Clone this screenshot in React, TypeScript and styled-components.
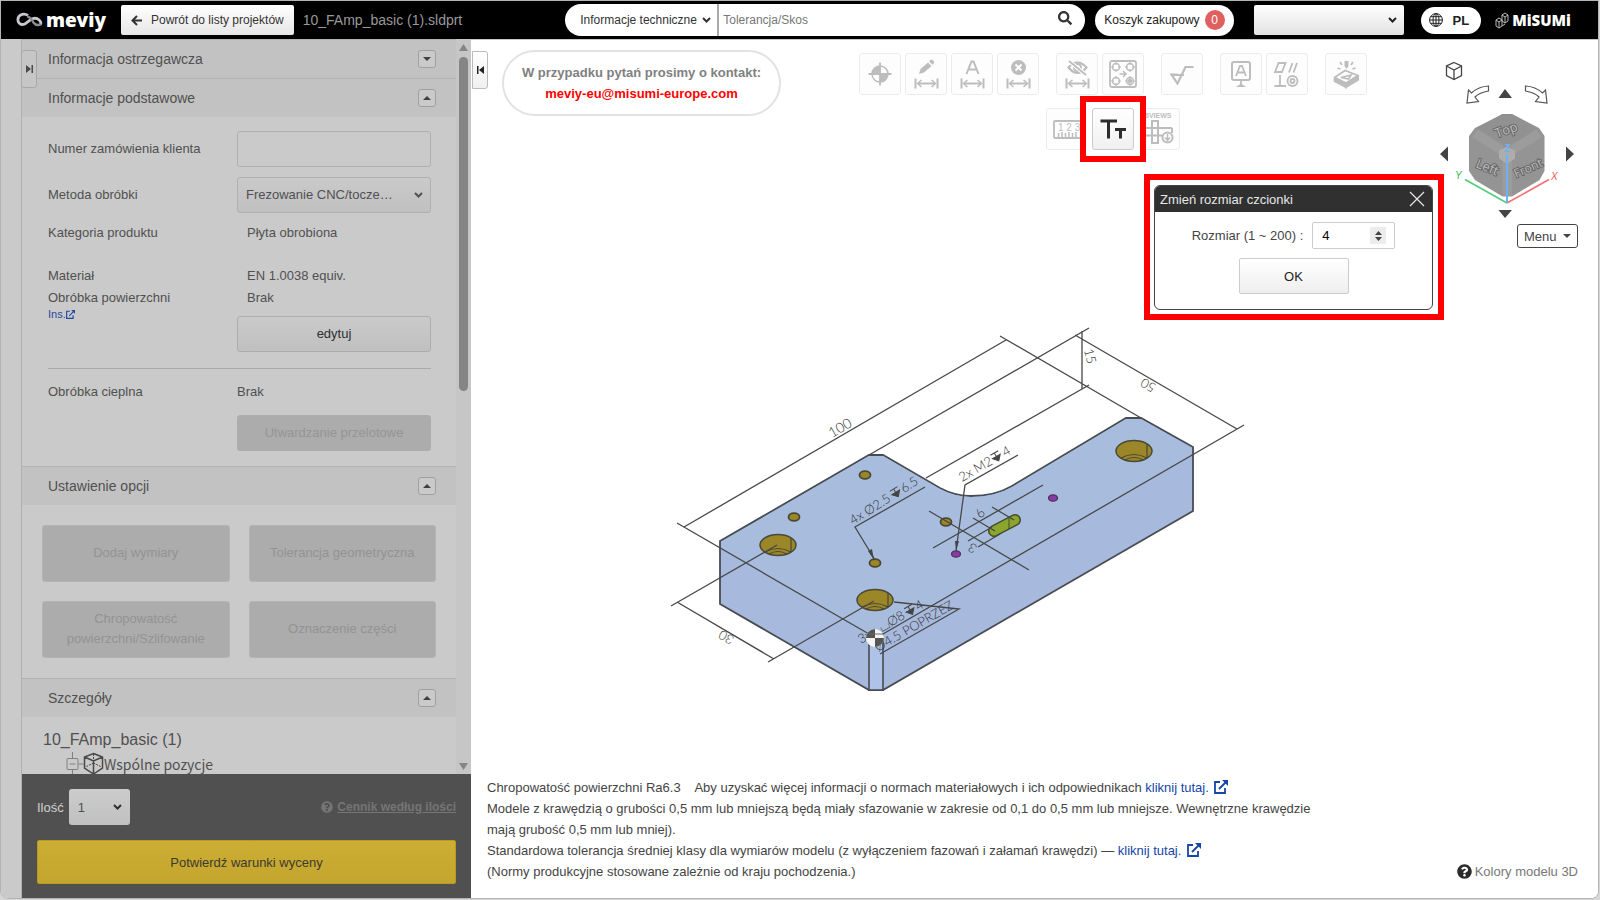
import React from "react";
import styled, { createGlobalStyle } from "styled-components";
import { FaSearch, FaQuestionCircle } from "react-icons/fa";

const GlobalStyle = createGlobalStyle`
  *, *::before, *::after { box-sizing: border-box; }
  body {
    margin: 0;
    background: #d6d6d6;
    font-family: "Liberation Sans", Arial, sans-serif;
    font-size: 13px;
    color: #444;
  }
  button, input, select { font: inherit; color: inherit; margin: 0; }
`;

const Page = styled.div`
  height: 100vh;
  min-height: 700px;
  padding: 0 1px 1px 0;
`;

const Window = styled.div`
  display: flex;
  flex-direction: column;
  height: 100%;
  border: 1px solid #b4b4b4;
  border-radius: 0 0 8px 8px;
  overflow: hidden;
  background: #fff;
`;

/* Header */

const Header = styled.header`
  display: flex;
  align-items: center;
  flex: none;
  height: 38px;
  padding: 0 27px 0 15px;
  background: #000;
  color: #fff;
`;

const Brand = styled.a`
  display: flex;
  align-items: center;
  gap: 3px;
  width: 90px;
  color: #fff;
  font: 800 19px/28px "Open Sans", sans-serif;
  text-decoration: none;
`;

const BackButton = styled.button`
  display: flex;
  align-items: center;
  gap: 9px;
  height: 30px;
  margin-left: 15px;
  padding: 0 10px;
  border: 0;
  border-radius: 2px;
  background: linear-gradient(#fff, #e6e6e6);
  color: #333;
  font-size: 12px;
  white-space: nowrap;
`;

const FileName = styled.span`
  margin-left: 9px;
  color: #999;
  font-size: 14px;
  white-space: nowrap;
`;

const Search = styled.form`
  display: flex;
  align-items: center;
  width: 520px;
  height: 32px;
  margin-left: auto;
  border-radius: 16px;
  background: #fff;
  color: #333;
  overflow: hidden;
`;

const SelectWrap = styled.span<{ $right: number }>`
  position: relative;
  display: block;
  svg {
    position: absolute;
    right: ${(p) => p.$right}px;
    top: 50%;
    margin-top: -4px;
    pointer-events: none;
  }
`;

const SearchSelect = styled.select`
  appearance: none;
  width: 154px;
  height: 32px;
  padding: 0 20px 0 15px;
  border: 0;
  border-right: 2px solid #aaa;
  background: transparent;
  font-size: 12px;
`;

const SearchInput = styled.input`
  flex: 1;
  min-width: 0;
  height: 32px;
  padding: 0 4px;
  border: 0;
  outline: 0;
  font-size: 12px;
  &::placeholder { color: #777; opacity: 1; }
`;

const SearchButton = styled.button`
  display: flex;
  padding: 0 13px 4px;
  border: 0;
  background: none;
`;

const CartButton = styled.button`
  display: flex;
  align-items: center;
  gap: 5px;
  height: 31px;
  margin-left: 10px;
  padding: 0 9px;
  border: 0;
  border-radius: 16px;
  background: #fff;
  color: #222;
  font-size: 12px;
  white-space: nowrap;
`;

const Badge = styled.span`
  width: 20px;
  height: 20px;
  border-radius: 10px;
  background: #e06060;
  color: #fff;
  font-size: 12px;
  line-height: 20px;
  text-align: center;
`;

const AccountSelect = styled.select`
  appearance: none;
  display: block;
  width: 150px;
  height: 30px;
  border: 0;
  border-radius: 2px;
  background: linear-gradient(#fff, #e2e2e2);
`;

const AccountWrap = styled(SelectWrap)`
  margin-left: 20px;
  color: #222;
`;

const LangButton = styled.button`
  display: flex;
  align-items: center;
  gap: 10px;
  height: 27px;
  margin-left: 17px;
  padding: 0 12px 0 8px;
  border: 0;
  border-radius: 14px;
  background: #fff;
  color: #222;
  font-weight: bold;
`;

const Misumi = styled.a`
  display: flex;
  align-items: center;
  gap: 3px;
  margin-left: 14px;
  color: #fff;
  font: 800 15px/20px "Open Sans", sans-serif;
  text-decoration: none;
`;

/* Sidebar */

const Main = styled.main`
  display: flex;
  flex: 1;
  min-height: 0;
`;

const Sidebar = styled.aside`
  position: relative;
  display: flex;
  flex: none;
  width: 470px;
  padding-left: 20px;
  background: #cacaca;
  color: #505050;
`;

const SidePanel = styled.div`
  display: flex;
  flex-direction: column;
  flex: 1;
  border-left: 1px solid #b0b0b0;
`;

const PanelHandle = styled.button<{ $left: number; $light?: boolean }>`
  position: absolute;
  z-index: 1;
  top: 11px;
  left: ${(p) => p.$left}px;
  display: flex;
  align-items: center;
  justify-content: center;
  width: 16px;
  height: 38px;
  padding: 0;
  border: 1px solid ${(p) => (p.$light ? "#bbb" : "#a8a8a8")};
  border-radius: ${(p) => (p.$light ? "0 3px 3px 0" : "3px")};
  background: ${(p) => (p.$light ? "linear-gradient(#fff, #f0f0f0)" : "#c6c6c6")};
  color: ${(p) => (p.$light ? "#222" : "#4a4a4a")};
`;

const ScrollRow = styled.div`
  display: flex;
  flex: 1;
  min-height: 0;
`;

const ScrollContent = styled.div`
  flex: 1;
  overflow: hidden;
`;

const ScrollTrack = styled.div`
  display: flex;
  flex-direction: column;
  align-items: center;
  width: 15px;
  padding: 5px 0 4px;
  background: #c6c6c6;
  color: #858585;
`;

const ScrollThumb = styled.div`
  flex: none;
  width: 9px;
  height: 46%;
  margin: 6px 0 auto;
  border-radius: 5px;
  background: #858585;
`;

const SectionHead = styled.div`
  display: flex;
  align-items: center;
  justify-content: space-between;
  height: 39px;
  padding: 0 20px 0 26px;
  border-top: 1px solid #b2b2b2;
  background: #c2c2c2;
  h2 {
    margin: 0;
    font-size: 14px;
    font-weight: normal;
  }
`;

const Toggle = styled.button`
  display: flex;
  align-items: center;
  justify-content: center;
  width: 18px;
  height: 18px;
  padding: 0;
  border: 1px solid #a0a0a0;
  border-radius: 3px;
  background: #cacaca;
  color: #404040;
`;

const BasicBody = styled.div`
  padding: 14px 25px 15px 26px;
`;

const Field = styled.div`
  display: grid;
  grid-template-columns: 189px 1fr;
  align-items: center;
  margin-bottom: 10px;
  line-height: 20px;
`;

const Details = styled.div`
  display: grid;
  grid-template-columns: 189px 1fr;
  margin-top: 22px;
  line-height: 22px;
`;

const HeatRow = styled(Details)`
  margin-top: 16px;
  padding-top: 12px;
  border-top: 1px solid #aaa;
`;

const Value = styled.div`
  padding-left: 10px;
`;

const TextInput = styled.input`
  width: 100%;
  height: 36px;
  padding: 0 9px;
  border: 1px solid #b0b0b0;
  border-radius: 3px;
  background: #cacaca;
`;

const FieldSelect = styled.select`
  appearance: none;
  display: block;
  width: 100%;
  height: 36px;
  padding: 0 30px 0 8px;
  border: 1px solid #b0b0b0;
  border-radius: 3px;
  background: linear-gradient(#cacaca, #c0c0c0);
`;

const SideButton = styled.button<{ $gap: number }>`
  width: 100%;
  height: 36px;
  margin-top: ${(p) => p.$gap}px;
  border: 1px solid #adadad;
  border-radius: 3px;
  background: linear-gradient(#cacaca, #c0c0c0);
  color: #303030;
  &:disabled {
    background: #acacac;
    color: #959595;
  }
`;

const SmallLink = styled.a`
  display: flex;
  align-items: center;
  color: #1f4a9c;
  font-size: 11px;
  line-height: 10px;
  text-decoration: none;
`;

const OptionGrid = styled.div`
  display: grid;
  grid-template-columns: 1fr 1fr;
  gap: 19px;
  padding: 20px;
`;

const OptionButton = styled.button`
  height: 57px;
  padding: 0 8px 2px;
  border: 1px solid #b4b4b4;
  border-radius: 3px;
  background: #acacac;
  line-height: 20px;
  &:disabled { color: #939393; }
`;

const Tree = styled.div`
  padding: 11px 21px 0;
  font-size: 16px;
  line-height: 24px;
`;

const TreeRow = styled.div`
  display: flex;
  align-items: center;
  padding-left: 23px;
  font-family: "Noto Sans CJK JP", sans-serif;
  font-size: 14px;
`;

const SideFooter = styled.div`
  flex: none;
  padding: 15px 15px 14px;
  background: #505050;
`;

const QuantityRow = styled.div`
  display: flex;
  align-items: center;
  height: 36px;
  margin-bottom: 15px;
  color: #d0d0d0;
  label { margin-right: 5px; }
`;

const QuantitySelect = styled.select`
  appearance: none;
  display: block;
  width: 61px;
  height: 36px;
  padding: 0 9px;
  border: 0;
  border-radius: 3px;
  background: linear-gradient(#cccccc, #c0c0c0);
  color: #505050;
`;

const QuantityWrap = styled(SelectWrap)`
  color: #303030;
`;

const PriceLink = styled.a`
  display: flex;
  align-items: center;
  gap: 4px;
  margin-left: auto;
  color: #757575;
  font-size: 12px;
  text-decoration: none;
  b { text-decoration: underline; }
`;

const ConfirmButton = styled.button`
  display: block;
  width: 100%;
  height: 44px;
  border: 1px solid #b89a20;
  border-radius: 2px;
  background: linear-gradient(#ccae32, #c4a52f);
  color: #3c3a30;
`;

/* Model view */

const Viewport = styled.section`
  position: relative;
  display: flex;
  flex-direction: column;
  flex: 1;
  min-width: 0;
  border-top: 1px solid #c8c8c8;
  background: #fff;
`;

const ViewTop = styled.div`
  display: flex;
  align-items: flex-start;
  flex: none;
  height: 270px;
`;

const Contact = styled.div`
  flex: none;
  width: 279px;
  height: 66px;
  margin: 10px 0 0 31px;
  padding-top: 10px;
  border: 2px solid #e2e2e2;
  border-radius: 33px;
  color: #808080;
  font-weight: bold;
  line-height: 21px;
  text-align: center;
  a { color: #f00; text-decoration: none; }
`;

const Toolbar = styled.div`
  display: flex;
  flex-direction: column;
  align-items: center;
  flex: 1;
  gap: 13px;
  margin: 13px 0 0 8px;
`;

const ToolRow = styled.div`
  display: flex;
  gap: 17px;
`;

const ToolGroup = styled.div`
  display: flex;
  gap: 4px;
`;

const Tool = styled.button`
  display: block;
  width: 42px;
  height: 42px;
  padding: 0;
  border: 1px solid #ececec;
  border-radius: 3px;
  background: #fdfdfd;
  color: #bdbdbd;
  svg { display: block; margin: 1px; }
`;

const ActiveTool = styled(Tool)`
  border-color: #ccc;
  background: linear-gradient(#fff, #f0f0f0);
  color: #2c2c2c;
`;

const Highlight = styled.div`
  position: relative;
  z-index: 1;
  margin: -12px;
  padding: 6px;
  border: 6px solid #f00;
  background: #fff;
`;

const NavPanel = styled.div`
  display: flex;
  flex-direction: column;
  align-items: flex-start;
  flex: none;
  width: 162px;
  padding-top: 14px;
`;

const MenuButton = styled.button`
  display: flex;
  align-items: center;
  gap: 6px;
  height: 24px;
  margin-left: 81px;
  padding: 0 6px;
  border: 1px solid #444;
  border-radius: 3px;
  background: #fff;
  color: #444;
`;

const DialogFrame = styled.div`
  position: absolute;
  z-index: 2;
  top: 134px;
  right: 154px;
  width: 300px;
  padding: 5px 5px 4px 4px;
  border: 6px solid #f00;
  background: #fff;
`;

const Dialog = styled.div`
  border: 1px solid #444;
  border-radius: 6px;
  overflow: hidden;
`;

const DialogTitle = styled.div`
  display: flex;
  align-items: center;
  justify-content: space-between;
  height: 26px;
  padding: 0 7px 0 5px;
  background: #303030;
  color: #e8e8e8;
`;

const CloseButton = styled.button`
  display: flex;
  padding: 0;
  border: 0;
  background: none;
`;

const DialogBody = styled.div`
  display: flex;
  flex-direction: column;
  align-items: center;
  gap: 9px;
  padding: 10px 0 15px;
`;

const SizeRow = styled.label`
  display: flex;
  align-items: center;
  gap: 9px;
`;

const SizeBox = styled.span`
  display: flex;
  align-items: center;
  width: 83px;
  height: 27px;
  padding-right: 8px;
  border: 1px solid #ccc;
  border-radius: 2px;
`;

const SizeInput = styled.input`
  appearance: textfield;
  flex: 1;
  min-width: 0;
  padding: 0 9px;
  border: 0;
  background: none;
  color: #000;
  &::-webkit-inner-spin-button { appearance: none; }
`;

const Spinner = styled.span`
  display: flex;
  align-items: center;
  justify-content: center;
  width: 16px;
  height: 17px;
  background: #ececec;
`;

const OkButton = styled.button`
  width: 110px;
  height: 36px;
  border: 1px solid #ccc;
  border-radius: 2px;
  background: linear-gradient(#fff, #eee);
  color: #222;
`;

const Stage = styled.div`
  flex: 1;
  min-height: 0;
  margin-left: 189px;
  svg { display: block; }
`;

const Bottom = styled.div`
  display: flex;
  align-items: flex-end;
  justify-content: space-between;
  flex: none;
  padding: 0 20px 16px 16px;
  line-height: 21px;
`;

const Notes = styled.div`
  max-width: 835px;
  p { margin: 0; }
  a { color: #1546a8; text-decoration: none; white-space: nowrap; }
  a svg { margin-left: 2px; vertical-align: -2px; }
`;

const ColorsLink = styled.a`
  display: flex;
  align-items: center;
  gap: 3px;
  color: #777;
  text-decoration: none;
  white-space: nowrap;
  svg { color: #2c2c2c; }
`;

const Chevron = () => (
  <svg width="9" height="8" viewBox="0 0 9 8" fill="none" stroke="currentColor" strokeWidth="2">
    <path d="M1 2l3.500 3.500L8 2" />
  </svg>
);

const Triangle = ({ down, w = 8 }: { down?: boolean; w?: number }) => (
  <svg width={w} height={w === 8 ? 4 : 7} viewBox="0 0 8 4" preserveAspectRatio="none">
    <path d={down ? "M0 0h8L4 4z" : "M0 4h8L4 0z"} fill="currentColor" />
  </svg>
);

const External = ({ size }: { size: number }) => (
  <svg width={size} height={size} viewBox="0 0 14 14" fill="none" stroke="currentColor" strokeWidth="1.800">
    <path d="M6 2H1v11h10V8M5 9l7-7" />
    <path d="M8 0h6v6z" fill="currentColor" stroke="none" />
  </svg>
);

const dimArrow = (
  <g>
    <path d="M8.500 23.500v10M30.500 23.500v10M11 28.500h17" strokeWidth="2" />
    <path d="M14.500 25l-4 3.500 4 3.500M24.500 25l4 3.500-4 3.500" strokeWidth="1.500" />
  </g>
);

const toolIcons: Record<string, React.ReactNode> = {
  Origin: (
    <g>
      <circle cx="19" cy="19" r="8" strokeWidth="1.500" />
      <path d="M19 11v8h-8a8 8 0 0 1 8-8zM19 27v-8h8a8 8 0 0 1-8 8z" fill="currentColor" stroke="none" />
      <path d="M19 7.500v23M7.500 19h23" strokeWidth="1.800" />
    </g>
  ),
  Edit: (
    <g>
      <path d="M12 19l1.500-5 7.500-6.500 3.500 3.500-7.500 6.500zM22 6.500l1.500-1.500q1-.8 2 0l1.300 1.300q.8 1 0 2L25.500 9.700z" fill="currentColor" stroke="none" />
      {dimArrow}
    </g>
  ),
  Text: (
    <g>
      <path d="M13.500 19L18.500 6.500h2l5 12.500M15.500 14.500h8" strokeWidth="2" />
      {dimArrow}
    </g>
  ),
  Remove: (
    <g>
      <circle cx="19.500" cy="12.500" r="7.500" fill="currentColor" stroke="none" />
      <path d="M16.500 9.500l6 6M22.500 9.500l-6 6" stroke="#fff" strokeWidth="2" />
      {dimArrow}
    </g>
  ),
  Hide: (
    <g>
      <path d="M10.500 12.500q9-10 18 0q-9 11-18 0z" strokeWidth="2.200" />
      <circle cx="19.500" cy="12.500" r="3.500" strokeWidth="2" />
      <path d="M11 6l17 14" stroke="#fff" strokeWidth="4" />
      <path d="M11 6l17 14" strokeWidth="1.800" />
      {dimArrow}
    </g>
  ),
  Pattern: (
    <g strokeWidth="1.500">
      <rect x="6" y="6" width="26" height="26" rx="2" strokeWidth="1.800" />
      {[[12, 12], [26, 12], [12, 26], [26, 26]].map(([x, y]) => (
        <g key={`${x}-${y}`}>
          <circle cx={x} cy={y} r="3.500" />
          <path d={`M${x} ${y - 5}v3M${x} ${y + 5}v-3M${x - 5} ${y}h3M${x + 5} ${y}h-3`} strokeWidth="1" />
        </g>
      ))}
      <circle cx="26" cy="26" r="1.500" fill="currentColor" />
      <path d="M15.500 19h6M19 16l3 3-3 3" />
    </g>
  ),
  Roughness: <path d="M14.500 19.500h-6l6 9 8-16.500h8M8 20h13" strokeWidth="2.200" />,
  Datum: (
    <g>
      <rect x="10" y="7" width="18" height="18" rx="2" strokeWidth="2" />
      <path d="M14 21l4-10h2l4 10M15.500 17.500h7M19 25v6" strokeWidth="1.800" />
      <path d="M14 32h10l-5-3.500z" fill="currentColor" stroke="none" />
    </g>
  ),
  Geometry: (
    <g strokeWidth="1.800">
      <path d="M7 17l3.500-9h7l-3.500 9zM21 17.500L24.500 8M25.500 17.500L29 8M12 20v11M6.500 31H18" />
      <circle cx="24.500" cy="26" r="5" />
      <circle cx="24.500" cy="26" r="2" />
    </g>
  ),
  Engrave: (
    <g strokeWidth="1.700">
      <path d="M7.500 22.500L18 15.500l13 5v4l-12 7.500-11.500-6zM7.500 22.500L19 28l12-7.500" />
      <path d="M8 23l11 5.500v3.500L8 26.500zM31 21v4l-12 7v-3.500z" fill="currentColor" />
      <path d="M14 22.500l10-2.500-2.500 4zM13 7l2 3M26 7l-2 3M10.500 13l3 1M28.500 13l-3 1" />
      <path d="M17.500 6h4v5l-2 3-2-3z" fill="currentColor" stroke="none" />
    </g>
  ),
  Ruler: (
    <g>
      <rect x="6" y="11" width="28" height="17" rx="1" strokeWidth="1.800" />
      <path d="M10.500 27v-4M14 27v-5M17.500 27v-4M21 27v-5M24.500 27v-4M28 27v-5" strokeWidth="1.500" />
      <text x="10" y="21" fontSize="10" fill="currentColor" stroke="none">1 2 3</text>
    </g>
  ),
  FontSize: (
    <path d="M6.500 11h16.500M14.500 11v17.500M21 19.500h11M26.500 19.500v9" strokeWidth="3" />
  ),
  Views: (
    <g strokeWidth="2">
      <text x="5" y="8" fontSize="7" fontWeight="bold" fill="currentColor" stroke="none">6VIEWS</text>
      <path d="M12 11h6v22h-6zM5 18h27M5 25.500h17M5 18v7.500M32 18v5" />
      <circle cx="27.500" cy="27.500" r="5" fill="#fdfdfd" />
      <path d="M27.500 24v6M25 27.500l2.500 3 2.500-3" strokeWidth="1.500" />
    </g>
  ),
};

const ToolIcon = ({ name }: { name: string }) => (
  <svg width="38" height="38" viewBox="0 0 38 38" fill="none" stroke="currentColor" aria-hidden="true">
    {toolIcons[name]}
  </svg>
);

const toolGroups = [
  ["Origin", "Edit", "Text", "Remove"],
  ["Hide", "Pattern"],
  ["Roughness"],
  ["Datum", "Geometry"],
  ["Engrave"],
];

const NavCube = () => (
  <svg width="150" height="170" viewBox="1436 55 150 170" fill="none" aria-label="View cube">
    <path d="M1454 63.500l7.500 3.500v9.500l-7.500 4-7.500-4V67zM1446.500 67l7.500 4 7.500-4M1454 71v9.500" stroke="#444" strokeWidth="1.300" />
    <path d="M1467 104l1.500-13 3 3q7-6.500 17-7v5q-9 1.500-13.500 6l3.500 4.500zM1547 104l-1.500-13-3 3q-7-6.500-17-7v5q9 1.500 13.500 6l-3.500 4.500z" stroke="#555" strokeWidth="1.200" />
    <path d="M1498.500 99h13.500l-7-9zM1498.500 211h13.500l-7 8zM1440 155l8-7.500v15zM1574 155l-8-7.500v15z" fill="#444" />
    <path d="M1502.500 115h9.500l27 14 5.500 8v35l-5 9-27.500 16.500h-9.500l-27.500-16.500-6-9v-35l6-8z" fill="#949494" />
    <path d="M1502.500 115h9.500l24 14-26 18h-6l-26-18z" fill="#919191" />
    <path d="M1472 138l6-7 26 16-5 8zM1542 138l-6-7-26 16 5 8zM1502.500 160h9.500v37h-9.500z" fill="#9c9c9c" />
    <path d="M1507 147.500l8 4v8l-8 5-8-5v-8z" fill="#adadad" />
    <g fontFamily="Open Sans" fontSize="13" fill="#bcbcbc" stroke="#686868" strokeWidth="2" paintOrder="stroke">
      <text transform="translate(1497 139) rotate(-20)">Top</text>
      <text transform="translate(1475 168) rotate(22)">Left</text>
      <text transform="translate(1516 179) rotate(-24)" fontSize="12">Front</text>
    </g>
    <path d="M1507 204l-42-23.500" stroke="#4fcf78" strokeWidth="1.600" />
    <path d="M1507 204l42-23.500" stroke="#f67272" strokeWidth="1.600" />
    <path d="M1507 156v48" stroke="#6cb2f5" strokeWidth="2" />
    <g fontSize="10" fontStyle="italic">
      <text x="1504" y="153" fill="#6cb2f5" fontWeight="bold">Z</text>
      <text x="1551" y="181" fill="#e85555">X</text>
      <text x="1455" y="180" fill="#31b45c">Y</text>
    </g>
  </svg>
);

const bigHoles = [[778, 545], [875, 600], [1134, 451]];
const smallHoles = [[865, 475], [794, 517], [946, 522], [875, 563]];
const tappedHoles = [[956, 554], [1053, 498]];

const dimensionLines =
  "M684 527L1006 340M1000 336L1141 418M677 523L869 634M869 455L1089 328M926 478L1089 385M1082 331V389" +
  "M1075 335L1237 429M883 634L1244 425M677 602L774 659M671 606L777 545M768 662L874 601" +
  "M929 511L1029 570M933 548L1043 485M973 518L995 531M992 507L1014 520M968 541L992 527M978 547L1000 534" +
  "M875 560L855 527L925 487M956 551L965 485L1018 455M894 602L959 609L880 654";

const depthMark = (x: number, y: number) => (
  <path d={`M${x} ${y - 9}h9M${x + 4.5} ${y - 9}v8M${x} ${y - 5}h9l-4.500 5z`} stroke="#444" fill="#444" />
);

const Plate = () => (
  <svg width="600" height="400" viewBox="660 310 600 400" fill="none" role="img" aria-label="10_FAmp_basic (1)">
    <path
      d="M720 541L869 455h14L940 488Q955 496 971 496Q995 496 1012 486L1126 418h15L1193 447V511L883 690h-14L720 604z"
      fill="#a7b9dc"
      stroke="#484c52"
      strokeWidth="1.800"
    />
    <path d="M721 542L869 456h14L940 489Q955 497 971 497Q995 497 1012 487L1126 419h15L1192 448V455L883 634h-14L721 548z" fill="#a8bddd" />
    <path d="M869 634v56h14v-56z" fill="#aec3e7" stroke="#484c52" strokeWidth="1.600" />
    {bigHoles.map(([x, y]) => (
      <g key={x} stroke="#4a4836" strokeWidth="1.500">
        <ellipse cx={x} cy={y} rx="18" ry="10.500" fill="#9c8728" />
        <path d={`M${x - 13} ${y + 7}q13-7 26 0M${x - 9} ${y + 9}q9-5 18 0M${x + 13} ${y - 7}v14`} strokeWidth="1.200" />
      </g>
    ))}
    {smallHoles.map(([x, y]) => (
      <ellipse key={x + y} cx={x} cy={y} rx="5.500" ry="3.800" fill="#9c8728" stroke="#4a4836" strokeWidth="1.800" />
    ))}
    {tappedHoles.map(([x, y]) => (
      <ellipse key={x} cx={x} cy={y} rx="4.500" ry="3.200" fill="#883aa2" stroke="#4d3560" strokeWidth="1.300" />
    ))}
    <path d="M994 531L1015 520" stroke="#464d2c" strokeWidth="12" strokeLinecap="round" />
    <path d="M994 531L1015 520" stroke="#8ca52e" strokeWidth="9" strokeLinecap="round" />
    <path d="M1009 518v11" stroke="#464d2c" />
    <path d={dimensionLines} stroke="#484848" strokeWidth="1.300" />
    <path d="M874 560l-6-9 4-2zM956 551l-1-10 4 0z" fill="#444" />
    <g fontFamily="Lato, sans-serif" fontWeight="300" fontSize="13" fill="#303030">
      <text transform="translate(832 438) rotate(-30)" fontSize="14">100</text>
      <text transform="translate(1084 350) rotate(76)">15</text>
      <text transform="translate(1157 385) rotate(210)">50</text>
      <text transform="translate(735 637) rotate(210)">30</text>
      <text transform="translate(981 519) rotate(-50)">6</text>
      <text transform="translate(978 546) rotate(210)">3</text>
      <g transform="translate(853 525) rotate(-32)">
        <text>4x Ø2.5</text>
        {depthMark(49, 0)}
        <text x="60">6.5</text>
      </g>
      <g transform="translate(962 482) rotate(-30)">
        <text>2x M2</text>
        {depthMark(38, 0)}
        <text x="50">4</text>
      </g>
      <g transform="translate(861 644) rotate(-30)">
        <text>3x</text>
        <text x="24">⌴Ø8</text>
        {depthMark(55, 0)}
        <text x="66">4</text>
      </g>
      <text transform="translate(878 652) rotate(-30)">Ø4.5 POPRZEZ</text>
    </g>
    <circle cx="875" cy="638" r="9" fill="#f4f4f4" />
    <path d="M875 638v-9a9 9 0 0 0-9 9zM875 638v9a9 9 0 0 0 9-9z" fill="#555" />
    <path d="M869 634h14" stroke="#666" />
  </svg>
);

const Section = ({ title, closed }: { title: string; closed?: boolean }) => (
  <SectionHead>
    <h2>{title}</h2>
    <Toggle type="button" aria-label={title}>
      <Triangle down={closed} />
    </Toggle>
  </SectionHead>
);

export default function App() {
  return (
    <Page>
      <GlobalStyle />
      <Window>
        <Header>
          <Brand href="#">
            <svg width="29" height="16" viewBox="0 0 29 16" fill="none" stroke="#c8c8ce">
              <path d="M13 3Q9 .5 5 2.500Q1 5 2.500 10Q5 14.500 10 12Q13 9.500 16 7.500Q21 4.500 25 8Q28 11 26 13" strokeWidth="3" />
              <path d="M12 4Q16 5 19 11Q22 15 27 12.500" stroke="#8b8b91" strokeWidth="2.500" />
            </svg>
            meviy
          </Brand>
          <BackButton type="button">
            <svg width="11" height="11" viewBox="0 0 11 11" fill="none" stroke="currentColor" strokeWidth="2">
              <path d="M11 5.500H1.500M6 1L1.500 5.500 6 10" />
            </svg>
            Powrót do listy projektów
          </BackButton>
          <FileName>10_FAmp_basic (1).sldprt</FileName>
          <Search onSubmit={(e) => e.preventDefault()}>
            <SelectWrap $right={8}>
              <SearchSelect aria-label="Zakres">
                <option>Informacje techniczne</option>
              </SearchSelect>
              <Chevron />
            </SelectWrap>
            <SearchInput placeholder="Tolerancja/Skos" aria-label="Szukaj" />
            <SearchButton type="submit" aria-label="Szukaj">
              <FaSearch size={14} />
            </SearchButton>
          </Search>
          <CartButton type="button">
            Koszyk zakupowy <Badge>0</Badge>
          </CartButton>
          <AccountWrap $right={7}>
            <AccountSelect aria-label="Konto" />
            <Chevron />
          </AccountWrap>
          <LangButton type="button">
            <svg width="14" height="14" viewBox="0 0 14 14" fill="none" stroke="currentColor">
              <circle cx="7" cy="7" r="6.400" />
              <ellipse cx="7" cy="7" rx="3" ry="6.400" />
              <path d="M.5 7h13M7 .5v13M1.500 3.700h11M1.500 10.300h11" />
            </svg>
            PL
          </LangButton>
          <Misumi href="#">
            <svg width="14" height="17" viewBox="0 0 14 17" fill="none" stroke="#bbb">
              <path d="M7 6V3l3-2 3 2v6l-3 2-3-2zM7 3l3 2 3-2M10 5v6M1 8l3-2 3 2v6l-3 2-3-2zM1 8l3 2 3-2M4 10v6M7 14l3-2" />
            </svg>
            MiSUMi
          </Misumi>
        </Header>

        <Main>
          <Sidebar>
            <PanelHandle type="button" $left={20} aria-label="Rozwiń panel">
              <svg width="7" height="8" viewBox="0 0 7 8">
                <path d="M0 0l5 4-5 4zM5.500 0H7v8H5.500z" fill="currentColor" />
              </svg>
            </PanelHandle>
            <SidePanel>
              <ScrollRow>
                <ScrollContent>
                  <Section title="Informacja ostrzegawcza" closed />
                  <Section title="Informacje podstawowe" />
                  <BasicBody>
                    <Field>
                      <label htmlFor="order">Numer zamówienia klienta</label>
                      <TextInput id="order" />
                    </Field>
                    <Field>
                      <label htmlFor="method">Metoda obróbki</label>
                      <SelectWrap $right={8}>
                        <FieldSelect id="method">
                          <option>Frezowanie CNC/tocze…</option>
                        </FieldSelect>
                        <Chevron />
                      </SelectWrap>
                    </Field>
                    <Field>
                      <span>Kategoria produktu</span>
                      <Value>Płyta obrobiona</Value>
                    </Field>
                    <Details>
                      <div>
                        <div>Materiał</div>
                        <div>Obróbka powierzchni</div>
                        <SmallLink href="#">
                          Ins.
                          <External size={9} />
                        </SmallLink>
                      </div>
                      <div>
                        <Value>EN 1.0038 equiv.</Value>
                        <Value>Brak</Value>
                        <SideButton type="button" $gap={7}>edytuj</SideButton>
                      </div>
                    </Details>
                    <HeatRow>
                      <div>Obróbka cieplna</div>
                      <div>
                        Brak
                        <SideButton type="button" $gap={12} disabled>Utwardzanie przelotowe</SideButton>
                      </div>
                    </HeatRow>
                  </BasicBody>
                  <Section title="Ustawienie opcji" />
                  <OptionGrid>
                    <OptionButton type="button" disabled>Dodaj wymiary</OptionButton>
                    <OptionButton type="button" disabled>Tolerancja geometryczna</OptionButton>
                    <OptionButton type="button" disabled>Chropowatość powierzchni/Szlifowanie</OptionButton>
                    <OptionButton type="button" disabled>Oznaczenie części</OptionButton>
                  </OptionGrid>
                  <Section title="Szczegóły" />
                  <Tree>
                    <div>10_FAmp_basic (1)</div>
                    <TreeRow>
                      <svg width="38" height="24" viewBox="0 0 38 24" fill="none" stroke="#808080">
                        <path d="M6.500 0v6M6.500 18v6M12.500 12h5M3.500 12h6" />
                        <rect x="1" y="6.500" width="11" height="11" rx="1" />
                        <path d="M27.500 1.500l9 3.500v11l-9 6-9-6V5zM18.500 5l9 4 9-4M27.500 9v13" stroke="#484848" strokeWidth="1.500" />
                        <path d="M27.500 2v9l-8 4M27.500 11l8 4" stroke="#484848" strokeDasharray="2 1" />
                      </svg>
                      Wspólne pozycje
                    </TreeRow>
                  </Tree>
                </ScrollContent>
                <ScrollTrack>
                  <Triangle w={9} />
                  <ScrollThumb />
                  <Triangle w={9} down />
                </ScrollTrack>
              </ScrollRow>
              <SideFooter>
                <QuantityRow>
                  <label htmlFor="qty">Ilość</label>
                  <QuantityWrap $right={8}>
                    <QuantitySelect id="qty">
                      <option>1</option>
                    </QuantitySelect>
                    <Chevron />
                  </QuantityWrap>
                  <PriceLink href="#">
                    <FaQuestionCircle size={12} />
                    <b>Cennik według ilości</b>
                  </PriceLink>
                </QuantityRow>
                <ConfirmButton type="button">Potwierdź warunki wyceny</ConfirmButton>
              </SideFooter>
            </SidePanel>
          </Sidebar>

          <Viewport>
            <PanelHandle type="button" $left={1} $light aria-label="Zwiń panel">
              <svg width="7" height="8" viewBox="0 0 7 8">
                <path d="M7 0L2 4l5 4zM0 0h1.500v8H0z" fill="currentColor" />
              </svg>
            </PanelHandle>
            <ViewTop>
              <Contact>
                W przypadku pytań prosimy o kontakt:
                <br />
                <a href="mailto:meviy-eu@misumi-europe.com">meviy-eu@misumi-europe.com</a>
              </Contact>
              <Toolbar>
                <ToolRow>
                  {toolGroups.map((group) => (
                    <ToolGroup key={group[0]}>
                      {group.map((name) => (
                        <Tool key={name} type="button" aria-label={name} disabled>
                          <ToolIcon name={name} />
                        </Tool>
                      ))}
                    </ToolGroup>
                  ))}
                </ToolRow>
                <ToolGroup>
                  <Tool type="button" aria-label="Ruler" disabled>
                    <ToolIcon name="Ruler" />
                  </Tool>
                  <Highlight>
                    <ActiveTool type="button" aria-label="Font size">
                      <ToolIcon name="FontSize" />
                    </ActiveTool>
                  </Highlight>
                  <Tool type="button" aria-label="Views" disabled>
                    <ToolIcon name="Views" />
                  </Tool>
                </ToolGroup>
              </Toolbar>
              <NavPanel>
                <NavCube />
                <MenuButton type="button">
                  Menu <Triangle down />
                </MenuButton>
              </NavPanel>
            </ViewTop>

            <DialogFrame>
              <Dialog role="dialog" aria-label="Zmień rozmiar czcionki">
                <DialogTitle>
                  Zmień rozmiar czcionki
                  <CloseButton type="button" aria-label="Zamknij">
                    <svg width="16" height="16" viewBox="0 0 16 16" stroke="currentColor" strokeWidth="1.200">
                      <path d="M1 1l14 14M15 1L1 15" />
                    </svg>
                  </CloseButton>
                </DialogTitle>
                <DialogBody>
                  <SizeRow>
                    Rozmiar (1 ~ 200) :
                    <SizeBox>
                      <SizeInput type="number" min={1} max={200} defaultValue={4} />
                      <Spinner>
                        <svg width="7" height="10" viewBox="0 0 7 10">
                          <path d="M0 4h7L3.500 0zM0 6h7l-3.500 4z" fill="#444" />
                        </svg>
                      </Spinner>
                    </SizeBox>
                  </SizeRow>
                  <OkButton type="button">OK</OkButton>
                </DialogBody>
              </Dialog>
            </DialogFrame>

            <Stage>
              <Plate />
            </Stage>

            <Bottom>
              <Notes>
                <p>
                  Chropowatość powierzchni Ra6.3 &nbsp;&nbsp; Aby uzyskać więcej informacji o normach materiałowych i ich
                  odpowiednikach{" "}
                  <a href="#">
                    kliknij tutaj. <External size={14} />
                  </a>
                </p>
                <p>
                  Modele z krawędzią o grubości 0,5 mm lub mniejszą będą miały sfazowanie w zakresie od 0,1 do 0,5 mm lub
                  mniejsze. Wewnętrzne krawędzie mają grubość 0,5 mm lub mniej).
                </p>
                <p>
                  Standardowa tolerancja średniej klasy dla wymiarów modelu (z wyłączeniem fazowań i załamań krawędzi) —{" "}
                  <a href="#">
                    kliknij tutaj. <External size={14} />
                  </a>
                </p>
                <p>(Normy produkcyjne stosowane zależnie od kraju pochodzenia.)</p>
              </Notes>
              <ColorsLink href="#">
                <FaQuestionCircle size={15} />
                Kolory modelu 3D
              </ColorsLink>
            </Bottom>
          </Viewport>
        </Main>
      </Window>
    </Page>
  );
}
